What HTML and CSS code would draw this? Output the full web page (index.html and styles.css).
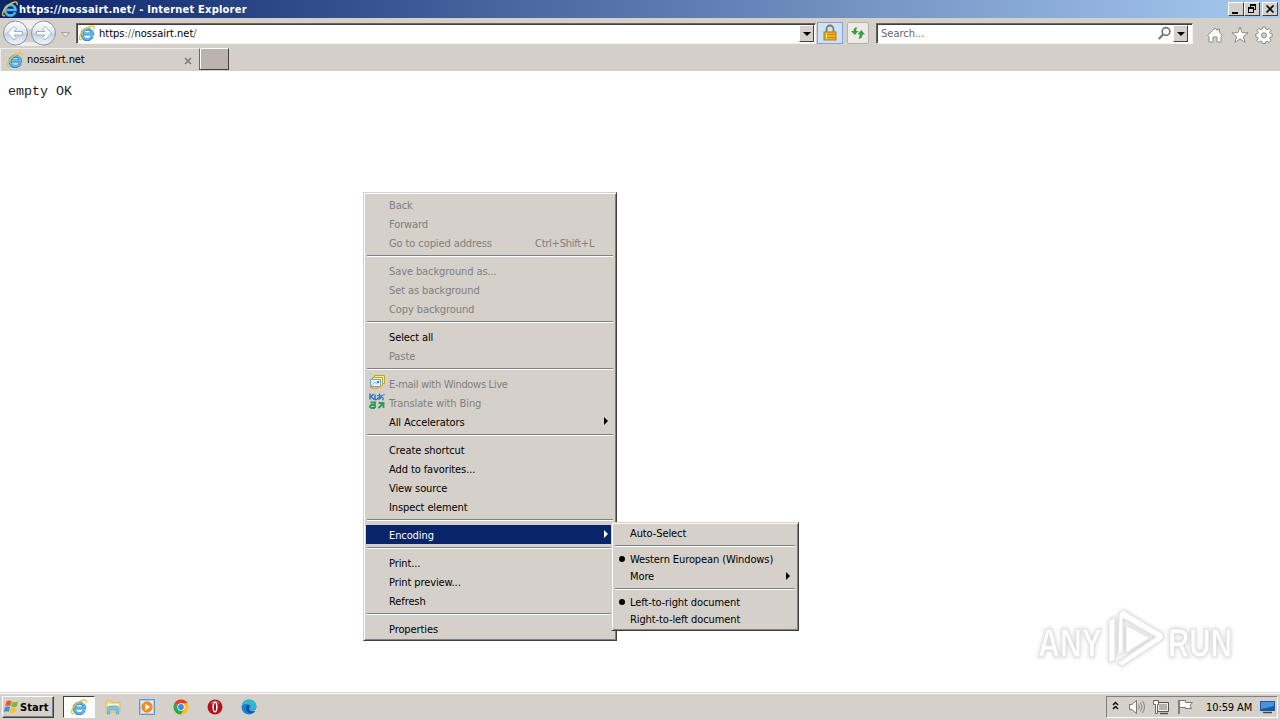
FILE: index.html
```html
<!DOCTYPE html>
<html lang="en">
<head>
    <meta charset="UTF-8">
    <title>https://nossairt.net/ - Internet Explorer</title>
    <link rel="stylesheet" href="styles.css">
</head>
<body>

    <!-- shared icon -->
    <svg class="defs" width="0" height="0">
        <symbol id="ie" viewBox="0 0 16 16">
            <path d="M13.300 11.300A5.300 5.300 0 1 1 13.600 8.900H4.500" fill="none" stroke="#2484c6" stroke-width="3"/>
            <path d="M13.100 11.300A5.300 5.300 0 1 1 13.600 8.900H4.500" fill="none" stroke="#5cbcf0" stroke-width="1.800"/>
            <path d="M3 14.800C-1.500 15.500.5 9 6 4.500 11 .5 16.300-.8 15 4" fill="none" stroke="#f0c02c" stroke-width="1.400"/>
        </symbol>
    </svg>

    <div class="titlebar">
        <svg class="ie"><use href="#ie"/></svg>
        <span class="title">https://nossairt.net/ - Internet Explorer</span>
        <div class="win-buttons">
            <div class="win-btn"><svg width="14" height="12"><path d="M3 9h6v2H3z"/></svg></div>
            <div class="win-btn"><svg width="14" height="12"><path d="M5 1h6v6H9V6h1V3H6v1H5zM3 4h6v6H3zM4 6v3h4V6z" fill-rule="evenodd"/></svg></div>
            <div class="win-btn close"><svg width="14" height="12"><path d="M3.500 2.500l7 7M10.500 2.500l-7 7" stroke="#000" stroke-width="1.700"/></svg></div>
        </div>
    </div>

    <div class="navbar">
        <svg class="nav-arrows" width="72" height="28" viewBox="0 0 72 28">
            <defs>
                <linearGradient id="orb" x1="0" y1="0" x2="0" y2="1">
                    <stop offset="0" stop-color="#fff"/>
                    <stop offset=".45" stop-color="#dfe7f0"/>
                    <stop offset=".55" stop-color="#c3d3e4"/>
                    <stop offset="1" stop-color="#f2f9ff"/>
                </linearGradient>
            </defs>
            <path d="M15 1h28v5q-14 8-28 0zM15 27q14-8 28 0z" fill="#f0eeeb"/>
            <circle cx="15.500" cy="14" r="12" fill="url(#orb)" stroke="#8593a3"/>
            <circle cx="43.500" cy="14" r="12" fill="url(#orb)" stroke="#8593a3"/>
            <path d="M7.500 14l6.500-6.500 2.500 2.500-2.500 2.500h8.500V16H14l2.500 2.500L14 21z" fill="#fff" stroke="#9fb0c4"/>
            <path d="M51.500 14L45 7.500 42.500 10l2.500 2.500h-8.500V16H45l-2.500 2.500L45 21z" fill="#fff" stroke="#9fb0c4"/>
            <path d="M61.500 13.500h8l-4 4.500z" fill="#e6e2dd" stroke="#aaa5a0"/>
        </svg>
        <div class="address">
            <svg class="ie"><use href="#ie"/></svg>
            <span class="url">https<i>://</i>nossairt.net<i>/</i></span>
            <div class="drop"></div>
        </div>
        <div class="lock">
            <svg width="16" height="18" viewBox="0 0 16 18">
                <path d="M4.500 8V5a3.500 3.500 0 0 1 7 0v3" fill="none" stroke="#8b7650" stroke-width="1.800"/>
                <rect x="2" y="8" width="12" height="8" fill="#edb21d" stroke="#b07c14"/>
                <path d="M2 10.500h12M2 13.500h12" stroke="#c98d10"/>
                <path d="M4.500 9v6" stroke="#ffe58a"/>
            </svg>
        </div>
        <div class="refresh">
            <svg width="16" height="16" viewBox="0 0 16 16">
                <path d="M1 6h2.500Q3.500 2.500 7 2L6 6h2.500L4.800 10zM15 9.500h-2.500Q12.500 13.500 8.500 14L10 9.500H7.500L11.200 5z" fill="#35a03a"/>
            </svg>
        </div>
        <div class="search">
            <span class="placeholder">Search...</span>
            <svg width="15" height="15" viewBox="0 0 15 15">
                <circle cx="9" cy="5.500" r="3.900" fill="none" stroke="#77777b" stroke-width="1.700"/>
                <path d="M6.300 8.300L1.800 13" stroke="#77777b" stroke-width="2.300"/>
            </svg>
            <div class="drop"></div>
        </div>
        <div class="tools">
            <svg width="18" height="18" viewBox="0 0 18 18"><path d="M1.500 9.500L9 2l2.500 2.500V3h2v3.500l3 3-1.500 1.200V16h-4v-5H7v5H3v-5.300z" fill="#fff" stroke="#8a8a8a"/></svg>
            <svg width="18" height="18" viewBox="0 0 18 18"><path d="M9 1l2.100 5.600 6 .2-4.700 3.700 1.700 5.800L9 13l-5.100 3.300 1.700-5.800L.9 6.800l6-.2z" fill="#fff" stroke="#8a8a8a"/></svg>
            <svg width="18" height="18" viewBox="0 0 18 18">
                <path d="M7.500 1h3l.4 2.200 1.300.5L14 2.400 16 4.500l-1.300 1.800.5 1.300 2 .4v2.800l-2.100.4-.5 1.300 1.300 1.800-2 2.100-1.900-1.300-1.200.5-.4 2h-3l-.3-2-1.300-.5-1.800 1.300-2-2.100 1.200-1.800-.5-1.300L.8 10.800V8l2-.4.5-1.300L2 4.500l2-2.100 1.900 1.300 1.200-.5z" fill="#fff" stroke="#8a8a8a"/>
                <circle cx="9" cy="9.300" r="2.500" fill="#d4d0c8" stroke="#8a8a8a"/>
            </svg>
        </div>
    </div>

    <div class="tabbar">
        <div class="tab">
            <svg class="ie"><use href="#ie"/></svg>
            <span>nossairt.net</span>
            <svg class="tab-close" width="8" height="8"><path d="M1 1l6 6M7 1L1 7" stroke="#817d79" stroke-width="1.700"/></svg>
        </div>
        <div class="new-tab"></div>
    </div>

    <div class="page">
        <pre>empty OK</pre>

        <svg class="watermark" width="230" height="80" viewBox="0 0 230 80">
            <g class="mark">
                <text x="13" y="57" textLength="64" lengthAdjust="spacingAndGlyphs">ANY</text>
                <text x="143" y="57" textLength="64" lengthAdjust="spacingAndGlyphs">RUN</text>
                <path d="M94 14l4-4 40 24v5L97 66l-5-3 39-26-33-19v34l-5 3zM84 21l6-4v43l-6 3z"/>
                <path d="M101 25l24 13-24 15z"/>
            </g>
        </svg>
    </div>

    <div class="menu context">
        <div class="item off">Back</div>
        <div class="item off">Forward</div>
        <div class="item off">Go to copied address<span class="key">Ctrl+Shift+L</span></div>
        <div class="sep"></div>
        <div class="item off">Save background as...</div>
        <div class="item off">Set as background</div>
        <div class="item off">Copy background</div>
        <div class="sep"></div>
        <div class="item">Select all</div>
        <div class="item off">Paste</div>
        <div class="sep"></div>
        <div class="item off tight">
            <svg class="icon" width="16" height="16" viewBox="0 0 16 16">
                <path d="M5.500 1.500h10v8h-10z" fill="#f5e98a" stroke="#b9a832"/>
                <path d="M3.500 3.500h10v8h-10z" fill="#fdf5ad" stroke="#b9a832"/>
                <path d="M1.500 5.500h10v7h-10z" fill="#e6f2fd" stroke="#6ba0d6"/>
                <path d="M2 12l4-4 2 2" fill="none" stroke="#8ab8e6"/>
                <path d="M8 7h2v2H8z" fill="#2f74c8"/>
                <path d="M1 13q4 3 10 0l2-2" fill="none" stroke="#f2a72e" stroke-width="1.600"/>
            </svg>E-mail with Windows Live
        </div>
        <div class="item off">
            <svg class="icon" width="16" height="16" viewBox="0 0 16 16">
                <path d="M1 .5v6M1.500 4l3-3M2 3.500l3 3M6 1.500v5h2" fill="none" stroke="#3a74c4" stroke-width="1.500"/>
                <path d="M8 2.500h6M10.500 .5v6M13 3.500Q9 8 8.500 5.500 9 3.500 13 4.200q2.500 1 .3 3M14.500 1l1 1" fill="none" stroke="#3a74c4" stroke-width="1.200"/>
                <path d="M1.500 9.500H6V15M6 12H3q-2 0-2 1.500T3 15h3M9.500 15l4.500-4.500M9.500 10h5v5" fill="none" stroke="#2c9a57" stroke-width="1.800"/>
            </svg>Translate with Bing
        </div>
        <div class="item">All Accelerators<i class="arrow"></i></div>
        <div class="sep"></div>
        <div class="item">Create shortcut</div>
        <div class="item">Add to favorites...</div>
        <div class="item">View source</div>
        <div class="item">Inspect element</div>
        <div class="sep"></div>
        <div class="item selected">Encoding<i class="arrow"></i>
            <div class="menu submenu">
                <div class="item">Auto-Select</div>
                <div class="sep"></div>
                <div class="item checked">Western European (Windows)</div>
                <div class="item">More<i class="arrow"></i></div>
                <div class="sep"></div>
                <div class="item checked">Left-to-right document</div>
                <div class="item">Right-to-left document</div>
            </div>
        </div>
        <div class="sep"></div>
        <div class="item">Print...</div>
        <div class="item">Print preview...</div>
        <div class="item">Refresh</div>
        <div class="sep"></div>
        <div class="item">Properties</div>
    </div>

    <div class="taskbar">
        <div class="start">
            <svg width="17" height="16" viewBox="0 0 17 16">
                <path d="M3.500 2.500Q6 .8 8.500 2.200L7.300 7Q5 5.800 2.200 7.200z" fill="#e8592b"/>
                <path d="M9.500 2.700Q12 4 15 2.500L13.700 7.500Q11 8.800 8.300 7.400z" fill="#7fba2f"/>
                <path d="M2 8.200Q4.700 6.800 7 8L5.800 12.800Q3.500 11.500.7 13z" fill="#3f8fd8"/>
                <path d="M8 8.500Q10.700 9.800 13.400 8.500L12 13.400Q9.500 14.800 6.800 13.400z" fill="#f8c32c"/>
            </svg>
            <span>Start</span>
        </div>
        <div class="quick">
            <div class="app active"><svg class="ie"><use href="#ie"/></svg></div>
            <div class="app">
                <svg width="16" height="16" viewBox="0 0 16 16">
                    <path d="M1 2h5l1 1.500h8V13H1z" fill="#f3dc83" stroke="#d8b654" stroke-width=".7"/>
                    <path d="M2 5h12v3H2z" fill="#fff6c8"/>
                    <path d="M2.500 15V9q0-2 2-2h7q2 0 2 2v6h-2.300v-4H4.800v4z" fill="#7cc3ea" stroke="#4a9ccc" stroke-width=".6"/>
                </svg>
            </div>
            <div class="app">
                <svg width="16" height="16" viewBox="0 0 16 16">
                    <path d="M.5.5h15v15H.5z" fill="#a9cdec" stroke="#5e9bd0"/>
                    <path d="M2 2h12v12H2z" fill="#e4f0fa"/>
                    <circle cx="8" cy="8" r="5.700" fill="#f58a1f"/>
                    <path d="M6.200 4.800v6.400L11.200 8z" fill="#fff"/>
                </svg>
            </div>
            <div class="app">
                <svg width="16" height="16" viewBox="0 0 16 16">
                    <circle cx="8" cy="8" r="7.500" fill="#fbc116"/>
                    <path d="M8 8L1.500 4.250A7.500 7.500 0 0 1 14.500 4.250H8z" fill="#e33b2e"/>
                    <path d="M8 8L1.500 4.250A7.500 7.500 0 0 0 7.800 15.500L11.200 9.800z" fill="#2da94f"/>
                    <circle cx="8" cy="8" r="3.700" fill="#fff"/>
                    <circle cx="8" cy="8" r="2.900" fill="#4285f4"/>
                </svg>
            </div>
            <div class="app">
                <svg width="16" height="16" viewBox="0 0 16 16">
                    <circle cx="8" cy="8" r="7.500" fill="#b5121b"/>
                    <path d="M3 4.500Q8-1.500 13 4.500z" fill="#e0575b"/>
                    <ellipse cx="8" cy="8" rx="2.600" ry="5.500" fill="#fff"/>
                    <ellipse cx="8" cy="8" rx="1" ry="4.300" fill="#8d0d14"/>
                </svg>
            </div>
            <div class="app">
                <svg width="16" height="16" viewBox="0 0 16 16">
                    <circle cx="8" cy="8" r="7.500" fill="#1b7fd0"/>
                    <path d="M.8 6Q3 .5 8 .5q7.500.5 7.500 7Q15 11 11 11q-2.500-.3-1.500-2Q10 5.500 6 5 2.500 4.500.8 7z" fill="#35b8cc"/>
                    <path d="M6 6Q3.500 10 7 13.200q3.500 2.300 7-1.200-5 1.500-5.500-1.500-.8-.8.700-2.500Q9 6 6 6z" fill="#164f9c"/>
                    <path d="M9.300 7.500Q7.500 11.300 12 11.600q3.500 0 4-3.600v5l-2.500-1Q8 12.500 8.500 8.500z" fill="#d5d0c9"/>
                </svg>
            </div>
        </div>
        <div class="tray">
            <svg class="chev" width="7" height="10"><path d="M1 4l2.500-2.500L6 4M1 8l2.500-2.500L6 8" fill="none" stroke="#000" stroke-width="1.400"/></svg>
            <svg width="18" height="16" viewBox="0 0 18 16">
                <path d="M1.500 5.500H4L8.500 1.500v13L4 10.500H1.500z" fill="#fff" stroke="#777"/>
                <path d="M10.500 5.500q1.500 2.500 0 5M12.500 3.500q3 4.500 0 9M14.500 2q4 6 0 12" fill="none" stroke="#888"/>
            </svg>
            <svg width="17" height="16" viewBox="0 0 17 16">
                <path d="M4.500 3.500h11v9h-11z" fill="#b4b2af" stroke="#555"/>
                <path d="M5.500 4.500h9v7h-9z" fill="none" stroke="#eee"/>
                <path d="M7 14.500h8" stroke="#555" stroke-width="1.500"/>
                <path d="M.5 1.500h5v4h-1v9h-2v-9h-2z" fill="#fff" stroke="#666"/>
            </svg>
            <svg width="17" height="16" viewBox="0 0 17 16">
                <path d="M2 1v14" stroke="#666" stroke-width="1.500"/>
                <path d="M2.500 1.500h6v2h7l-2.500 3 1.500 3H8.500v-1h-6z" fill="#fff" stroke="#777"/>
            </svg>
            <span class="clock">10:59 AM</span>
            <svg class="desk" width="15" height="14" viewBox="0 0 15 14">
                <path d="M0 1h15v10H0z" fill="#1d57a8"/>
                <path d="M1 2h13v4L1 9z" fill="#4a93dc"/>
                <path d="M3 12.500h9" stroke="#444" stroke-width="1.500"/>
            </svg>
        </div>
    </div>

</body>
</html>
```
FILE: styles.css
```css
body {
    margin: 0;
    width: 1280px;
    height: 720px;
    overflow: hidden;
    display: flex;
    flex-direction: column;
    background: #fff;
    font-family: 'DejaVu Sans Condensed', 'DejaVu Sans', sans-serif;
    font-size: 11px;
    color: #000;
    position: relative;
}

svg {
    display: block;
    flex: none;
}

.defs {
    position: absolute;
}

.ie {
    width: 16px;
    height: 16px;
}

/* title bar */
.titlebar {
    height: 18px;
    flex: none;
    display: flex;
    align-items: center;
    padding: 0 2px;
    background: linear-gradient(to right, #0a246a, #a6caf0);
    color: #fff;
    font-weight: bold;
}

.title {
    flex: 1;
    margin-left: 1px;
    letter-spacing: 0.22px;
    white-space: nowrap;
}

.win-buttons {
    display: flex;
}

.win-btn {
    width: 14px;
    height: 12px;
    border: 1px solid;
    border-color: #fff #404040 #404040 #fff;
    background: #d5d0c9;
}

.win-btn.close {
    margin-left: 2px;
}

/* address row */
.navbar {
    height: 30px;
    flex: none;
    display: flex;
    align-items: center;
    background: #d5cfc9;
}

.nav-arrows {
    margin: 0 4px 0 0;
}

.address,
.search {
    height: 19px;
    display: flex;
    align-items: center;
    background: #fff;
    border: 1px solid;
    border-color: #6b6660 #f4f2ef #f4f2ef #6b6660;
    box-shadow: inset 1px 1px #404040;
}

.address {
    width: 738px;
}

.address .ie {
    margin: 0 4px 0 2px;
}

.url {
    flex: 1;
}

.url i {
    font-style: normal;
    color: #666;
}

.drop {
    width: 13px;
    height: 15px;
    margin: 1px 1px 0 0;
    border: 1px solid;
    border-color: #fff #404040 #404040 #fff;
    background: #d5d0c9;
    display: flex;
    align-items: center;
    justify-content: center;
}

.drop::after {
    content: "";
    border: 4px solid transparent;
    border-top-color: #000;
    border-bottom: 0;
}

.lock {
    width: 24px;
    height: 20px;
    margin-left: 1px;
    border: 1px solid #7ea6dc;
    background: #cfe1f9;
    display: flex;
    align-items: center;
    justify-content: center;
}

.refresh {
    width: 20px;
    height: 20px;
    margin: 0 7px 0 4px;
    border: 1px solid #b5b1ac;
    border-radius: 2px;
    background: #ece9e6;
    display: flex;
    align-items: center;
    justify-content: center;
}

.search {
    width: 315px;
}

.placeholder {
    flex: 1;
    margin-left: 4px;
    color: #666;
}

.search .drop {
    margin: 1px 4px 0 1px;
}

.tools {
    display: flex;
    gap: 6.5px;
    margin: 3px 0 0 13px;
}

/* tabs */
.tabbar {
    height: 23px;
    flex: none;
    display: flex;
    background: #d5cfc9;
}

.tab {
    width: 199px;
    height: 23px;
    display: flex;
    align-items: center;
    padding-left: 7px;
    box-sizing: border-box;
    box-shadow: inset 1px 1px #f0eeeb;
}

.tab span {
    flex: 1;
    margin-left: 4px;
    letter-spacing: -0.1px;
}

.tab-close {
    margin: 2px 7px 0 0;
}

.new-tab {
    width: 28px;
    height: 20px;
    border: 1px solid;
    border-color: #fff #404040 #404040 #6b6660;
    background: #bab3ae;
    box-shadow: inset 1px 0 #fff;
}

/* page */
.page {
    flex: 1;
    position: relative;
}

.page pre {
    margin: 13px 8px;
    font: 13.33px 'Liberation Mono', monospace;
    color: #1c1c1c;
}

.watermark {
    position: absolute;
    right: 25px;
    bottom: 12px;
    overflow: visible;
}

.mark {
    fill: #fff;
    stroke: #e2e2e2;
    stroke-width: 1;
    filter: drop-shadow(0 0 2px #ccc);
}

.mark text {
    font: bold 40px 'Liberation Sans Narrow', 'Liberation Sans', sans-serif;
}

/* menus */
.menu {
    position: absolute;
    box-sizing: border-box;
    padding: 2px;
    border: 1px solid;
    border-color: #d5d0c9 #404040 #404040 #d5d0c9;
    background: #d5d0c9;
    box-shadow: inset 1px 1px #fff, inset -1px -1px #808080;
}

.context {
    left: 363px;
    top: 192px;
    width: 254px;
}

.item {
    position: relative;
    height: 19px;
    line-height: 21px;
    padding-left: 23px;
    letter-spacing: -0.1px;
    white-space: nowrap;
    color: #000;
}

.item.off {
    color: #808080;
}

.item.tight {
    letter-spacing: -0.3px;
}

.item.selected {
    background: #0a246a;
    color: #fff;
    margin-right: 2px;
}

.key {
    position: absolute;
    left: 169px;
    letter-spacing: -0.25px;
}

.icon {
    position: absolute;
    left: 3px;
    top: 0;
}

.arrow {
    position: absolute;
    right: 6px;
    top: 5px;
    border: 4px solid transparent;
    border-left-color: currentColor;
    border-right: 0;
}

.selected > .arrow {
    right: 4px;
}

.sep {
    height: 1px;
    margin: 3px 1px 4px;
    border-top: 1px solid #808080;
    background: #fff;
}

.submenu {
    left: 245px;
    top: -3px;
    width: 188px;
}

.submenu .item {
    height: 17px;
    line-height: 17px;
    padding-left: 16px;
}

.submenu .arrow {
    top: 4px;
}

.checked::before {
    content: "";
    position: absolute;
    left: 5px;
    top: 5px;
    width: 6px;
    height: 6px;
    border-radius: 3px;
    background: #000;
}

/* taskbar */
.taskbar {
    height: 28px;
    flex: none;
    box-sizing: border-box;
    display: flex;
    align-items: center;
    padding: 2px 2px 0;
    background: #d5d0c9;
    box-shadow: inset 0 1px #d5d0c9, inset 0 2px #fff;
}

.start {
    width: 50px;
    height: 20px;
    display: flex;
    align-items: center;
    border: 1px solid;
    border-color: #fff #404040 #404040 #fff;
    box-shadow: inset -1px -1px #808080;
    font-weight: bold;
}

.start span {
    letter-spacing: 0.1px;
}

.quick {
    flex: 1;
    display: flex;
    align-items: center;
    gap: 2px;
    margin-left: 9px;
}

.app {
    width: 32px;
    height: 22px;
    display: flex;
    align-items: center;
    justify-content: center;
}

.app.active {
    width: 30px;
    height: 20px;
    border: 1px solid;
    border-color: #404040 #fff #fff #404040;
    background: #fff;
}

.tray {
    width: 170px;
    height: 20px;
    display: flex;
    align-items: center;
    border: 1px solid;
    border-color: #808080 #fff #fff #808080;
}

.chev {
    margin: 0 9px 2px 5px;
}

.tray svg + svg {
    margin-right: 7px;
}

.clock {
    flex: 1;
    margin-left: 5px;
    letter-spacing: -0.1px;
    white-space: nowrap;
}

.desk {
    margin-right: 2px;
}
```
